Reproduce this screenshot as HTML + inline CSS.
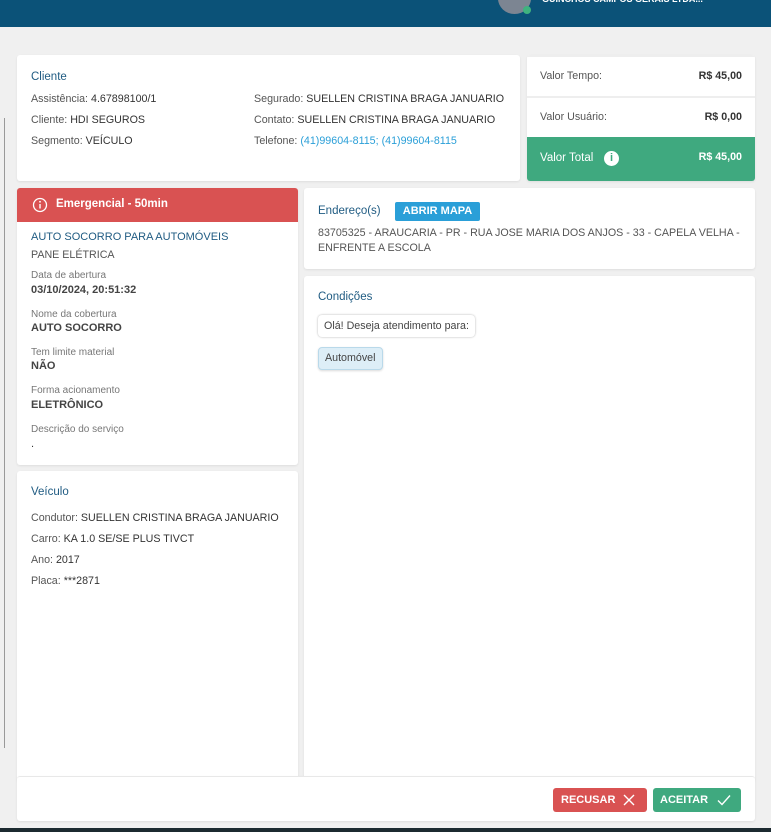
<!DOCTYPE html>
<html><head><meta charset="utf-8"><style>
*{box-sizing:border-box;margin:0;padding:0}
body{width:771px;height:832px;background:#f0f0f0;font-family:"Liberation Sans",sans-serif;font-size:10.7px;color:#555;position:relative;overflow:hidden}
.hdr{position:absolute;left:0;top:0;width:771px;height:27px;background:#0b5278}
.card{position:absolute;background:#fff;border-radius:3px;box-shadow:0 1px 2px rgba(0,0,0,.08)}
.t{color:#1f5b82;font-size:11.5px}
.abs{position:absolute;white-space:nowrap}
.lbl{color:#777;font-size:10px}
.val{color:#333;font-size:11px}
.dk{color:#333}
.lnk{color:#2a9fd8}
</style></head><body>
<div class="hdr">
  <div style="position:absolute;left:498px;top:-17px;width:33px;height:31px;border-radius:50%;background:#7c8592"></div>
  <div style="position:absolute;left:523px;top:6px;width:8px;height:8px;border-radius:50%;background:#3fb37f"></div>
  <div class="abs" style="left:542px;top:-6px;color:#fff;font-size:9px;font-weight:bold">GUINCHOS CAMPOS GERAIS LTDA...</div>
</div>
<div style="position:absolute;left:4px;top:118px;width:1px;height:630px;background:#999"></div>

<div class="card" style="left:17px;top:55px;width:503px;height:126px">
  <div class="abs t" style="left:14px;top:16px">Cliente</div>
  <div class="abs" style="left:14px;top:38px">Assistência: <span class="dk">4.67898100/1</span></div>
  <div class="abs" style="left:14px;top:59px">Cliente: <span class="dk">HDI SEGUROS</span></div>
  <div class="abs" style="left:14px;top:80px">Segmento: <span class="dk">VEÍCULO</span></div>
  <div class="abs" style="left:237px;top:38px">Segurado: <span class="dk">SUELLEN CRISTINA BRAGA JANUARIO</span></div>
  <div class="abs" style="left:237px;top:59px">Contato: <span class="dk">SUELLEN CRISTINA BRAGA JANUARIO</span></div>
  <div class="abs" style="left:237px;top:80px">Telefone: <span class="lnk">(41)99604-8115; (41)99604-8115</span></div>
</div>

<div class="card" style="left:527px;top:55px;width:228px;height:126px;overflow:hidden">
  <div style="position:absolute;left:0;top:0;width:228px;height:2px;background:#eee"></div>
  <div class="abs" style="left:13px;top:15px">Valor Tempo:</div>
  <div class="abs" style="right:13px;top:15px;font-weight:bold;color:#333">R$ 45,00</div>
  <div style="position:absolute;left:0;top:41px;width:228px;height:2px;background:#eee"></div>
  <div class="abs" style="left:13px;top:56px">Valor Usuário:</div>
  <div class="abs" style="right:13px;top:56px;font-weight:bold;color:#333">R$ 0,00</div>
  <div style="position:absolute;left:0;top:82px;width:228px;height:44px;background:#3fa97f">
    <div class="abs" style="left:13px;top:15px;color:#fff;font-size:11.5px">Valor Total</div>
    <div style="position:absolute;left:77px;top:14px;width:15px;height:15px;border-radius:50%;background:#fff;color:#3fa97f;font-size:11px;font-weight:bold;text-align:center;line-height:15px">i</div>
    <div class="abs" style="right:13px;top:14px;color:#fff;font-weight:bold">R$ 45,00</div>
  </div>
</div>

<div class="card" style="left:17px;top:188px;width:281px;height:277px;overflow:hidden">
  <div style="position:absolute;left:0;top:0;width:281px;height:34px;background:#d95252">
    <svg style="position:absolute;left:15px;top:9px" width="16" height="16" viewBox="0 0 16 16"><circle cx="8" cy="8" r="6.5" fill="none" stroke="#fff" stroke-width="1.3"/><line x1="8" y1="7" x2="8" y2="11.5" stroke="#fff" stroke-width="1.4"/><circle cx="8" cy="4.8" r=".9" fill="#fff"/></svg>
    <div class="abs" style="left:39px;top:10px;color:#fff;font-weight:bold;font-size:11.5px">Emergencial - 50min</div>
  </div>
  <div class="abs t" style="left:14px;top:43px;font-size:11px">AUTO SOCORRO PARA AUTOMÓVEIS</div>
  <div class="abs" style="left:14px;top:61px">PANE ELÉTRICA</div>
  <div class="abs lbl" style="left:14px;top:82px">Data de abertura</div>
  <div class="abs val" style="left:14px;top:96px;font-weight:bold;color:#444">03/10/2024, 20:51:32</div>
  <div class="abs lbl" style="left:14px;top:121px">Nome da cobertura</div>
  <div class="abs val" style="left:14px;top:134px;font-weight:bold;color:#444">AUTO SOCORRO</div>
  <div class="abs lbl" style="left:14px;top:159px">Tem limite material</div>
  <div class="abs val" style="left:14px;top:172px;font-weight:bold;color:#444">NÃO</div>
  <div class="abs lbl" style="left:14px;top:197px">Forma acionamento</div>
  <div class="abs val" style="left:14px;top:211px;font-weight:bold;color:#444">ELETRÔNICO</div>
  <div class="abs lbl" style="left:14px;top:236px">Descrição do serviço</div>
  <div class="abs val" style="left:14px;top:250px">.</div>
</div>

<div class="card" style="left:17px;top:471px;width:281px;height:310px">
  <div class="abs t" style="left:14px;top:15px">Veículo</div>
  <div class="abs" style="left:14px;top:41px">Condutor: <span class="dk">SUELLEN CRISTINA BRAGA JANUARIO</span></div>
  <div class="abs" style="left:14px;top:62px">Carro: <span class="dk">KA 1.0 SE/SE PLUS TIVCT</span></div>
  <div class="abs" style="left:14px;top:83px">Ano: <span class="dk">2017</span></div>
  <div class="abs" style="left:14px;top:104px">Placa: <span class="dk">***2871</span></div>
</div>

<div class="card" style="left:304px;top:188px;width:451px;height:81px">
  <div class="abs t" style="left:14px;top:17px">Endereço(s)</div>
  <div style="position:absolute;left:91px;top:14px;width:85px;height:19px;background:#2a9fd8;border-radius:2px;color:#fff;font-weight:bold;font-size:11px;text-align:center;line-height:19px">ABRIR MAPA</div>
  <div class="abs" style="left:14px;top:39px">83705325 - ARAUCARIA - PR - RUA JOSE MARIA DOS ANJOS - 33 - CAPELA VELHA -</div>
  <div class="abs" style="left:14px;top:54px">ENFRENTE A ESCOLA</div>
</div>

<div class="card" style="left:304px;top:276px;width:451px;height:505px">
  <div class="abs t" style="left:14px;top:15px">Condições</div>
  <div style="position:absolute;left:14px;top:39px;height:22px;padding:0 6px;border-radius:4px;background:#fff;box-shadow:0 0 2px rgba(0,0,0,.3);line-height:22px;color:#444;white-space:nowrap">Olá! Deseja atendimento para:</div>
  <div style="position:absolute;left:14px;top:71px;height:23px;padding:0 6px;border-radius:4px;background:#ddeef7;border:1px solid #b9d9ea;box-shadow:0 1px 2px rgba(0,0,0,.15);line-height:21px;color:#444">Automóvel</div>
</div>

<div class="card" style="left:17px;top:776px;width:738px;height:45px;border-top:1px solid #e8e8e8">
  <div style="position:absolute;left:536px;top:11px;width:94px;height:24px;background:#d95252;border-radius:3px;color:#fff;font-weight:bold;font-size:11px;line-height:24px;padding-left:8px">RECUSAR
    <svg style="position:absolute;left:70px;top:6px" width="12" height="12" viewBox="0 0 12 12"><path d="M1 1L11 11M11 1L1 11" stroke="#fff" stroke-width="1.4"/></svg></div>
  <div style="position:absolute;left:636px;top:11px;width:88px;height:24px;background:#3fa97f;border-radius:3px;color:#fff;font-weight:bold;font-size:11px;line-height:24px;padding-left:7px">ACEITAR
    <svg style="position:absolute;left:64px;top:6px" width="14" height="12" viewBox="0 0 14 12"><path d="M1 6.5L5 10.5L13 1.5" fill="none" stroke="#fff" stroke-width="1.4"/></svg></div>
</div>
<div style="position:absolute;left:0;top:828px;width:771px;height:4px;background:#1c2a30"></div>
</body></html>
